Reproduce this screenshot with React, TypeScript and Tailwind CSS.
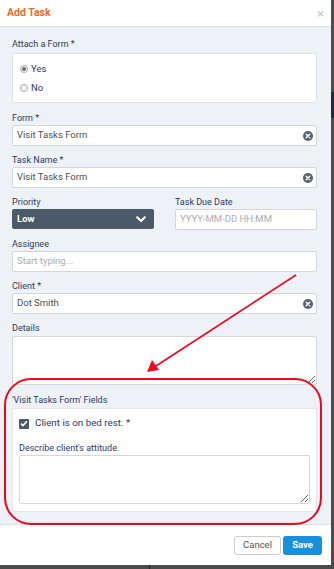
import React from "react";

const font = { fontFamily: "Roboto, 'Liberation Sans', sans-serif" };

function ClearIcon() {
  return (
    <svg width="10" height="10" viewBox="0 0 10 10" className="shrink-0">
      <circle cx="5" cy="5" r="5" fill="#58626e" />
      <path d="M3.2 3.2 L6.8 6.8 M6.8 3.2 L3.2 6.8" stroke="#fff" strokeWidth="1.4" strokeLinecap="round" />
    </svg>
  );
}

function Label({ children }: { children: React.ReactNode }) {
  return <div className="h-[14px] text-[9px] leading-[14px] text-[#2b3a67]">{children}</div>;
}

function TextInput({ value, placeholder, clear }: { value?: string; placeholder?: string; clear?: boolean }) {
  return (
    <div className="h-[21px] bg-white border border-[#d3d7dc] rounded-[2px] flex items-center pl-[4px] pr-[3px]">
      <span className={"flex-1 text-[9.5px] " + (value ? "text-[#4a4f55]" : "text-[#a9adb2]")}>{value ?? placeholder}</span>
      {clear && <ClearIcon />}
    </div>
  );
}

function Radio({ checked, label }: { checked?: boolean; label: string }) {
  return (
    <div className="flex items-center gap-[3px] h-[14px]">
      <span className="w-[8px] h-[8px] rounded-full border border-[#a4a8ad] bg-[#f3f3f3] flex items-center justify-center">
        {checked && <span className="w-[4px] h-[4px] rounded-full bg-[#6b7075]" />}
      </span>
      <span className="text-[9.5px] text-[#2b3a67]">{label}</span>
    </div>
  );
}

export default function App() {
  return (
    <div className="relative w-[334px] h-[569px] bg-[#4b4b4b] overflow-hidden" style={font}>
      <div className="absolute left-[331px] top-[92px] w-[3px] h-[26px] bg-[#1f2b38]" />
      <div className="absolute left-[149px] top-[565px] w-[1px] h-[4px] bg-[#1a2530]" />
      <div className="w-[331px] h-[565px] bg-white flex flex-col">
        <div className="h-[27px] shrink-0 flex items-center justify-between pl-[7px] pr-[7px] border-b border-[#dde1e6]">
          <span className="text-[10.5px] font-bold text-[#f26a1b]">Add Task</span>
          <span className="text-[13px] text-[#c4c7cb] leading-none">×</span>
        </div>
        <div className="flex-1 bg-[#eef1f5] px-[12px] pt-[10px] border-b border-[#dde1e6] pr-[14px]">
          <Label>Attach a Form *</Label>
          <div className="mt-[2px] h-[50px] bg-white border border-[#dfe2e6] rounded-[3px] pl-[7px] pt-[8px] flex flex-col gap-[5px]">
            <Radio checked label="Yes" />
            <Radio label="No" />
          </div>
          <div className="mt-[8px] flex flex-col gap-[7px]">
            <div>
              <Label>Form *</Label>
              <TextInput value="Visit Tasks Form" clear />
            </div>
            <div>
              <Label>Task Name *</Label>
              <TextInput value="Visit Tasks Form" clear />
            </div>
            <div className="flex gap-[21px]">
              <div className="w-[142px]">
                <Label>Priority</Label>
                <div className="h-[20px] bg-[#4c5968] rounded-[2px] flex items-center justify-between pl-[5px] pr-[8px]">
                  <span className="text-[9.5px] font-bold text-white">Low</span>
                  <svg width="10" height="7" viewBox="0 0 10 7">
                    <path d="M1.2 1.2 L5 5 L8.8 1.2" stroke="#fff" strokeWidth="2" fill="none" strokeLinecap="round" strokeLinejoin="round" />
                  </svg>
                </div>
              </div>
              <div className="flex-1">
                <Label>Task Due Date</Label>
                <TextInput placeholder="YYYY-MM-DD HH:MM" />
              </div>
            </div>
            <div>
              <Label>Assignee</Label>
              <TextInput placeholder="Start typing..." />
            </div>
            <div>
              <Label>Client *</Label>
              <TextInput value="Dot Smith" clear />
            </div>
            <div>
              <Label>Details</Label>
              <textarea className="block w-full h-[49px] mt-[1px] bg-white border border-[#d3d7dc] rounded-[2px] resize-y" />
            </div>
          </div>
          <div className="mt-[8px] h-[15px] text-[9px] leading-[15px] text-[#2b3a67]">'Visit Tasks Form' Fields</div>
          <div className="h-[104px] bg-white border border-[#e3e6ea] rounded-[2px] px-[6px] pt-[9px]">
            <div className="flex items-center gap-[6px] h-[11px]">
              <span className="w-[10px] h-[10px] rounded-[1px] bg-[#4c5968] flex items-center justify-center">
                <svg width="8" height="7" viewBox="0 0 8 7">
                  <path d="M1 3.6 L3 5.6 L7 1.3" stroke="#fff" strokeWidth="1.6" fill="none" />
                </svg>
              </span>
              <span className="text-[9.8px] text-[#2b3a67]">Client is on bed rest. *</span>
            </div>
            <div className="mt-[12px] h-[14px] text-[9px] leading-[14px] text-[#2b3a67]">Describe client's attitude.</div>
            <textarea className="block w-full h-[49px] bg-white border border-[#d3d7dc] rounded-[2px] resize-y" />
          </div>
        </div>
        <div className="h-[40px] shrink-0 flex items-center justify-end gap-[2px] pr-[9px]">
          <button className="w-[47px] h-[19px] bg-white border border-[#c9ccd0] rounded-[3px] text-[9.5px] text-[#555]">Cancel</button>
          <button className="w-[39px] h-[19px] bg-[#1790dd] rounded-[3px] text-[9.5px] font-bold text-white">Save</button>
        </div>
      </div>
      <svg className="absolute left-0 top-0 pointer-events-none" width="334" height="569" viewBox="0 0 334 569">
        <rect x="5" y="379" width="316" height="145" rx="26" ry="26" fill="none" stroke="#ec0a22" strokeWidth="2" />
        <line x1="296" y1="275" x2="156" y2="366" stroke="#ec0a22" strokeWidth="1.6" />
        <polygon points="147,372 152,360 159,370" fill="#ec0a22" />
      </svg>
    </div>
  );
}
